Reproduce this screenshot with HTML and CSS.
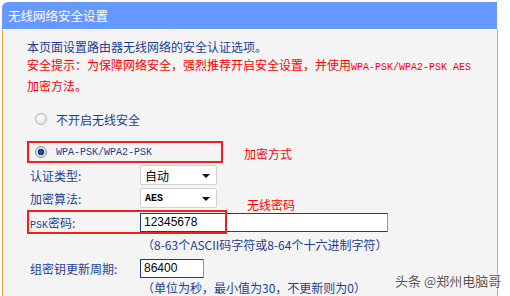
FILE: index.html
```html
<!DOCTYPE html>
<html>
<head>
    <meta charset="UTF-8">
    <title>无线网络安全设置</title>
    <link rel="stylesheet" href="styles.css">
</head>
<body>
<div class="panel">
    <div class="panel-title">无线网络安全设置</div>
    <div class="panel-body">
        <p class="intro">本页面设置路由器无线网络的安全认证选项。</p>
        <p class="warn">安全提示：为保障网络安全，强烈推荐开启安全设置，并使用<span class="mono">WPA-PSK/WPA2-PSK AES</span><br>加密方法。</p>

        <div class="option option-off">
            <span class="radio"></span>
            <span>不开启无线安全</span>
        </div>

        <div class="option option-on">
            <span class="radio checked"></span>
            <span class="mono">WPA-PSK/WPA2-PSK</span>
            <span class="mark mark-mode"></span>
            <span class="note note-mode">加密方式</span>
        </div>

        <div class="field field-auth">
            <label>认证类型:</label>
            <div class="select">自动<span class="arrow"></span></div>
        </div>

        <div class="field field-algo">
            <label>加密算法:</label>
            <div class="select mono">AES<span class="arrow"></span></div>
            <span class="note note-psk">无线密码</span>
        </div>

        <div class="field field-psk">
            <label><span class="mono">PSK</span>密码:</label>
            <div class="input input-wide">12345678</div>
            <span class="mark mark-psk"></span>
        </div>
        <p class="hint">（8-63个ASCII码字符或8-64个十六进制字符）</p>

        <div class="field field-group">
            <label>组密钥更新周期:</label>
            <div class="input input-short">86400</div>
        </div>
        <p class="hint">（单位为秒，最小值为30，不更新则为0）</p>
    </div>
</div>
<div class="watermark">头条 @郑州电脑哥</div>
</body>
</html>
```

FILE: styles.css
```css
body {
    margin: 0;
    background-color: #fff;
    font-family: "Noto Sans CJK SC", "Liberation Sans", sans-serif;
    font-size: 12px;
    color: #1c3f94;
    overflow: hidden;
    height: 296px;
}
.panel {
    width: 496px;
    margin: 2px 0 0 2px;
}
.panel-title {
    height: 27px;
    line-height: 27px;
    background-color: #6699ff;
    border-top-left-radius: 6px;
    color: #fff;
    font-size: 12.5px;
    padding-left: 6px;
    box-sizing: border-box;
    width: 495px;
}
.panel-body {
    background-color: #f4f4f4;
    border-left: 1px solid #f5a03c;
    border-right: 1px solid #f5a03c;
    border-top: 1px solid #fafafa;
    padding: 8px 0 0 24px;
    height: 267px;
    box-sizing: border-box;
}
p {
    margin: 0;
    line-height: 18px;
}
.warn {
    color: #ff0000;
}
.mono {
    font-family: "Liberation Mono", "DejaVu Sans Mono", monospace;
    font-size: 10px;
}
.option {
    position: relative;
    display: flex;
    align-items: center;
    height: 22px;
}
.option-off {
    margin-top: 13px;
}
.option-on {
    margin-top: 11px;
}
.radio {
    width: 12px;
    height: 12px;
    border-radius: 50%;
    border: 1px solid #b4b4b4;
    background: radial-gradient(circle at 40% 35%, #fff, #dcdcdc);
    box-sizing: border-box;
    margin: 0 9px 0 8px;
}
.radio.checked {
    border-color: #8a9aa8;
    background: radial-gradient(circle, #1a5fa8 0, #0a3a78 3px, #e6e6e6 3.6px, #cfcfcf 6px);
}
.mark {
    position: absolute;
    border: 2px solid #f02020;
}
.mark-mode {
    left: 0;
    top: 0;
    width: 192px;
    height: 18px;
}
.note {
    position: absolute;
    color: #ff0000;
    font-size: 12px;
}
.note-mode {
    left: 217px;
    top: 4px;
}
.note-psk {
    left: 220px;
    top: 8px;
}
.field {
    position: relative;
    display: flex;
    align-items: center;
    height: 20px;
    padding-left: 3px;
}
.field label {
    width: 110px;
}
.field-auth {
    margin-top: 2px;
}
.field-algo {
    margin-top: 3px;
}
.field-psk {
    margin-top: 4px;
}
.field-group {
    margin-top: 4px;
}
.select {
    position: relative;
    width: 77px;
    height: 20px;
    line-height: 19px;
    background-color: #fff;
    border: 1px solid #d2d2d2;
    border-radius: 2px;
    box-sizing: border-box;
    padding-left: 4px;
    color: #000;
}
.select.mono {
    font-weight: bold;
}
.arrow {
    position: absolute;
    right: 6px;
    top: 8px;
    border-left: 4px solid transparent;
    border-right: 4px solid transparent;
    border-top: 4px solid #111;
}
.input {
    height: 19px;
    line-height: 16px;
    background-color: #fff;
    border: 1px solid #1a3a9a;
    border-right-color: #7f9ad2;
    box-sizing: border-box;
    padding-left: 3px;
    color: #000;
    font-family: "Liberation Sans", sans-serif;
    font-size: 12px;
}
.input-wide {
    width: 248px;
}
.input-short {
    width: 64px;
}
.mark-psk {
    left: 0;
    top: -2px;
    width: 196px;
    height: 20px;
}
.hint {
    padding-left: 115px;
    margin-top: 4px;
}
.field-group + .hint {
    margin-top: 1px;
}
.watermark {
    position: absolute;
    left: 395px;
    top: 271px;
    font-size: 13px;
    color: #555;
    text-shadow: 0 0 2px #fff, 0 0 2px #fff;
}
```
